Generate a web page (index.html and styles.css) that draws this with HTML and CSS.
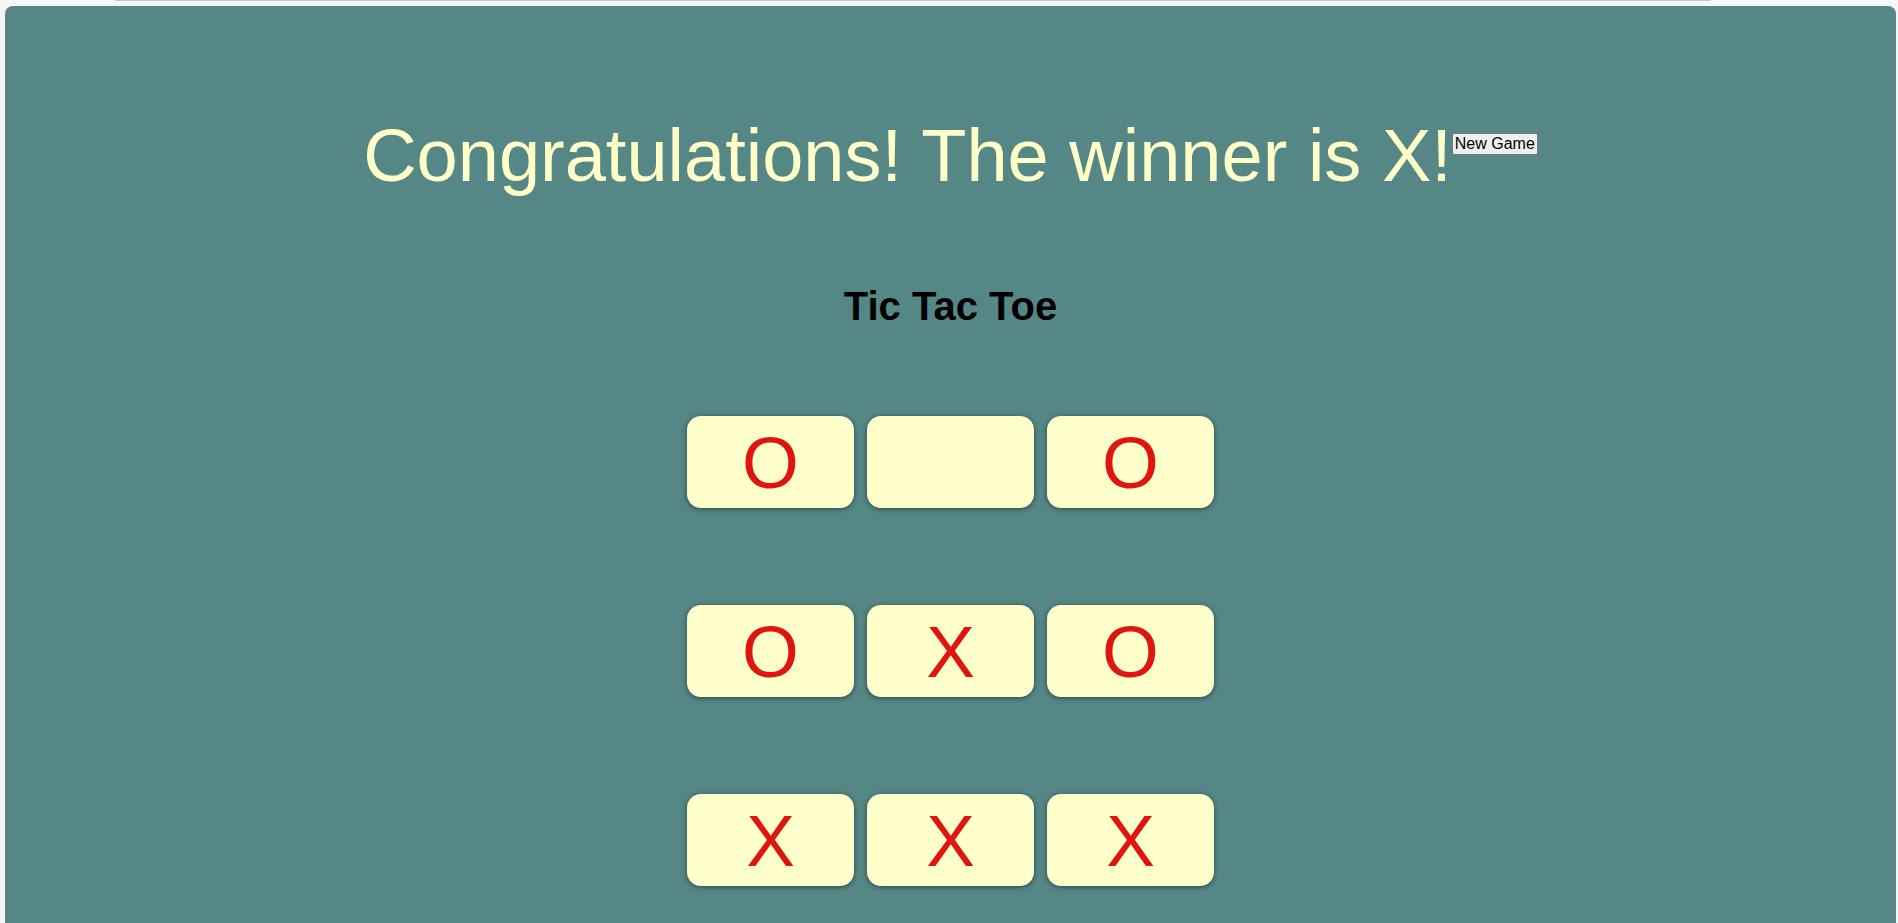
FILE: index.html
```html
<!DOCTYPE html>
<html lang="en">
<head>
<meta charset="utf-8">
<title>Tic Tac Toe</title>
<link rel="stylesheet" href="styles.css">
</head>
<body>
<div class="topline"></div>
<main class="app">
  <header class="status">
    <h1 class="status-text">Congratulations! The winner is X!</h1>
    <button class="new-game" type="button">New Game</button>
  </header>
  <h2 class="title">Tic Tac Toe</h2>
  <div class="board">
    <button class="cell" type="button">O</button>
    <button class="cell" type="button"></button>
    <button class="cell" type="button">O</button>
    <button class="cell" type="button">O</button>
    <button class="cell" type="button">X</button>
    <button class="cell" type="button">O</button>
    <button class="cell" type="button">X</button>
    <button class="cell" type="button">X</button>
    <button class="cell" type="button">X</button>
  </div>
</main>
</body>
</html>
```

FILE: styles.css
```css
html, body {
  margin: 0;
  padding: 0;
}

body {
  background: #f6f6f6;
  font-family: "Liberation Sans", Arial, sans-serif;
  overflow: hidden;
}

.topline {
  height: 1px;
  margin: 0 188px 0 115px;
  background: #c8c8c8;
}

.app {
  margin: 5px 2px 0 5px;
  min-height: 1000px;
  background: #548786;
  border-radius: 8px;
  padding-top: 108px;
  box-sizing: border-box;
}

.status {
  display: flex;
  justify-content: center;
  align-items: flex-start;
}

.status-text {
  margin: 0;
  font-size: 74px;
  line-height: 84px;
  font-weight: 400;
  color: #ffffc8;
}

.new-game {
  margin-top: 19px;
  font-family: "Liberation Sans", Arial, sans-serif;
  font-size: 16px;
  line-height: 18px;
  padding: 1px 2px;
  border: 1px solid #767676;
  border-radius: 2px;
  background: #efefef;
  color: #000;
}

.title {
  margin: 86px 0 0;
  text-align: center;
  font-size: 40px;
  line-height: 44px;
  font-weight: 700;
  color: #000;
}

.board {
  margin-top: 88px;
  display: grid;
  grid-template-columns: repeat(3, 167px);
  column-gap: 13px;
  row-gap: 97px;
  justify-content: center;
}

.cell {
  width: 167px;
  height: 92px;
  padding: 0;
  border: none;
  border-radius: 14px;
  background: #ffffcc;
  box-shadow: 0 1px 5px rgba(0, 0, 0, 0.5);
  font-family: "Liberation Sans", Arial, sans-serif;
  font-size: 73px;
  line-height: 1;
  color: #e0150f;
  display: flex;
  align-items: center;
  justify-content: center;
}
```
